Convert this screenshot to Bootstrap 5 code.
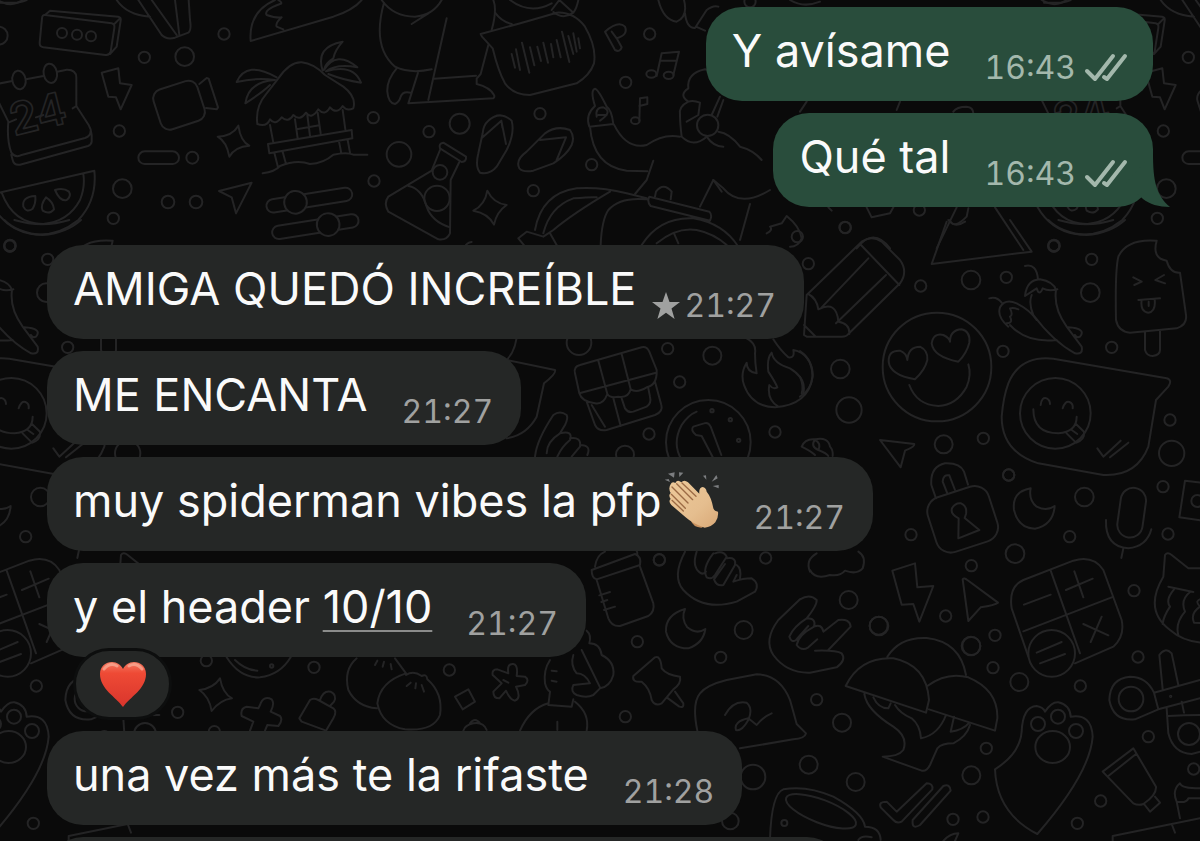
<!DOCTYPE html>
<html lang="es">
<head>
<meta charset="utf-8">
<meta name="viewport" content="width=device-width, initial-scale=1">
<title>Chat</title>
<link href="https://cdn.jsdelivr.net/npm/bootstrap@5.3.0/dist/css/bootstrap.min.css" rel="stylesheet">
<script src="https://cdn.jsdelivr.net/npm/bootstrap@5.3.0/dist/js/bootstrap.bundle.min.js" defer></script>
<style>
  body { background: #0a0a0a; color: #fafafa; font-family: Inter, "Liberation Sans", sans-serif; }
  .wallpaper { z-index: 0; }
  .wallpaper .ink { fill: none; stroke: #242425; stroke-width: 6; stroke-linecap: round; stroke-linejoin: round; }
  .wallpaper .solid { fill: #0a0a0a; }
  .wallpaper text { font-family: Inter, sans-serif; font-weight: 600; stroke-width: 5; }
  .thread { z-index: 1; padding: 7px 47px 0; }
  .bubble { min-height: 94px; padding: 14px 28px 13px 26px; border-radius: 36px; background: #252726; column-gap: 34px; max-width: 100%; }
  .bubble.sent { background: #294d3c; padding-right: 25px; }
  .bubble.starred { column-gap: 16px; }
  .bubble.upcoming { width: 72%; }
  .message { font-size: 45px; line-height: 60px; }
  .stamp { font-size: 32px; line-height: 40px; color: #a0a1a0; font-variant-numeric: tabular-nums; }
  .sent .stamp { color: #a3b8ac; }
  .tail { right: -17px; bottom: 0; }
  .received { margin-top: 38px; }
  .linked { color: inherit; text-decoration: underline; text-decoration-color: #8b8c8b; text-decoration-thickness: 2px; text-underline-offset: 7px; }
  .clap { margin: -16px 0 -16px 2px; vertical-align: 4px; }
  .reaction { width: 99px; height: 72px; margin: -9px 0 11px 26px; border: 3px solid #0d0e0e; border-radius: 36px; background: #252726; }
  .stack { row-gap: 12px; }
</style>
</head>
<body class="vh-100 overflow-hidden position-relative">

<svg class="wallpaper position-absolute top-0 start-0 w-100 h-100" viewBox="0 0 1200 841" preserveAspectRatio="xMidYMid slice" aria-hidden="true">
  <defs>
    <g id="doodles" class="ink">
      <!-- top left: box, calendar, camera, hut, melon, sliders -->
      <g transform="scale(.333333)">
        <path d="M135 45L335 70Q345 72 343 84L332 155Q328 167 316 165L130 142Q118 140 119 128L126 55Q127 44 135 45L150 32L355 50Q364 52 362 62L350 140L330 162M343 72L360 55"/>
        <circle cx="186" cy="99" r="15"/><circle cx="231" cy="104" r="15"/><circle cx="273" cy="109" r="15"/>
        <circle cx="672" cy="102" r="17"/><circle cx="433" cy="172" r="17"/><circle cx="554" cy="170" r="28"/><circle cx="-4" cy="107" r="27"/>
        <path d="M-10 252L37 243M78 238L130 228M172 215L200 209Q228 208 229 232V318L266 375Q274 388 275 405V425Q274 434 264 438L60 494Q42 497 38 480L34 464M-12 290L25 365Q20 420 34 458Q45 474 62 466L255 414Q272 408 272 392M25 368L48 358M108 352L130 345M218 325L229 318"/>
        <ellipse cx="57" cy="240" rx="20" ry="28" transform="rotate(-10 57 240)"/><ellipse cx="151" cy="220" rx="20" ry="29" transform="rotate(-10 151 220)"/>
        <text x="42" y="408" font-size="134" transform="rotate(-14 42 408)">24</text>
        <path d="M305 218L355 205L360 250L395 255L362 328L348 292L325 290Z"/>
        <rect x="468" y="253" width="138" height="125" rx="28" transform="rotate(-18 537 315)"/>
        <path d="M598 252L620 234L626 236L654 322L650 328L618 324"/>
        <path d="M715 377Q722 425 748 437Q705 440 688 470Q680 425 653 410Q697 408 715 377Z"/>
        <rect x="415" y="454" width="122" height="38" rx="19"/>
        <circle cx="577" cy="473" r="18"/><circle cx="358" cy="393" r="17"/><circle cx="367" cy="566" r="28"/><circle cx="504" cy="606" r="19"/><circle cx="588" cy="606" r="19"/><circle cx="340" cy="655" r="17"/><circle cx="30" cy="738" r="17"/>
        <path d="M657 573L755 548L708 640L695 592Z"/>
        <path d="M-10 580L283 512Q292 600 235 660Q170 712 95 702Q20 690 -20 620M5 578Q40 672 130 672Q205 665 240 600Q256 560 250 522"/>
        <path d="M106 588Q65 590 70 620Q80 640 98 626Q108 610 106 588ZM138 592Q120 615 128 632Q148 645 162 628Q160 605 138 592ZM165 570Q180 605 200 600Q215 588 207 575Q190 562 165 570Z"/>
        <path d="M835 235Q870 185 905 187Q940 190 975 225L1030 260Q1070 290 1060 325Q1040 335 1028 318Q1010 345 990 322Q975 350 955 328Q935 360 918 338Q900 365 880 345Q865 370 845 352Q825 378 810 358Q800 382 772 372Q765 320 800 280ZM810 375L820 428M885 358L893 415M1028 330L1036 388M922 345L930 408M953 338L962 400M890 388L958 376M804 432L1055 390L1057 415L808 460ZM823 458L834 502M848 455L858 492M1017 424L1024 460M1043 420L1050 458M788 520Q825 515 840 498Q890 478 930 492Q970 490 1000 464Q1040 455 1060 464H1102"/>
        <path d="M830 232Q740 180 710 246Q770 232 825 240Q745 245 736 310Q790 275 810 255M968 212Q945 140 1028 125Q1005 150 1000 175Q975 190 972 210Q1010 150 1072 202Q1010 190 978 214Q1060 190 1083 248Q1030 240 985 222"/>
        <g transform="rotate(-9 930 600)"><rect x="798" y="580" width="260" height="40" rx="20"/><circle class="solid" cx="886" cy="600" r="34"/></g>
        <g transform="rotate(-9 945 680)"><rect x="815" y="660" width="262" height="40" rx="20"/><circle class="solid" cx="985" cy="680" r="34"/></g>
        <path d="M350 0Q380 45 450 50M415 0L485 105Q500 120 525 113L565 98Q575 90 570 60L566 0M455 0L530 105M525 0L538 105M0 8H50Q70 5 80 0"/>
        <path d="M835 0Q850 10 840 12Q790 30 800 45Q830 55 845 52Q825 70 830 80L850 88M825 0Q745 35 752 123L1000 50Q1060 30 1085 0"/>
      </g>
      <!-- top middle: figure, voice note, sandals, flask, dancer -->
      <g transform="translate(360 0) scale(.333333)">
        <circle cx="40" cy="353" r="17"/><circle cx="207" cy="395" r="17"/><circle cx="299" cy="371" r="30"/><circle cx="117" cy="463" r="37"/><circle cx="42" cy="543" r="17"/><circle cx="540" cy="341" r="17"/><circle cx="520" cy="572" r="17"/><circle cx="695" cy="494" r="17"/><circle cx="797" cy="247" r="17"/><circle cx="869" cy="102" r="17"/>
        <path d="M72 8Q35 140 105 200Q150 222 215 208M65 0Q100 50 165 50Q220 45 245 0M155 72L205 40M260 55L205 300M110 205Q80 240 82 275Q85 310 105 312Q118 305 122 290Q128 272 152 278M175 215L145 310L400 295Q405 290 402 285Q390 262 350 252V236L362 222L385 135M222 236L348 227M400 0Q412 30 395 90"/>
        <path d="M362 102Q440 82 590 38Q640 35 675 80Q710 140 702 190Q690 225 650 250L510 285Q460 285 435 250Q415 215 398 145L366 110ZM455 162L465 203M468 148L480 210M486 128L508 218M510 142L523 196M532 140L543 183M550 128L564 188M573 132L580 172M590 120L602 172M606 95L628 186M625 108L640 162M640 100L650 155M655 115L660 145M405 38Q425 65 455 72M450 0Q510 45 575 10M575 30L598 0L640 38Q650 25 655 0M580 36Q610 60 640 38"/>
        <path d="M735 95L765 150Q780 158 785 142L770 115Q805 105 795 80Q775 60 735 95ZM755 95L770 115"/>
        <path d="M890 228L905 160L957 155L940 225M900 182L950 182"/><ellipse cx="874" cy="222" rx="15" ry="11"/><ellipse cx="926" cy="226" rx="15" ry="11"/>
        <path d="M838 362L840 295L862 292V312L838 318"/><ellipse cx="826" cy="362" rx="13" ry="10"/>
        <path d="M895 0Q910 60 950 65Q985 50 972 0M975 40Q980 85 1005 84L1040 30Q1060 15 1075 20M1008 80L1035 92"/>
        <path d="M385 362Q420 330 455 362Q465 400 440 450L410 500Q390 525 360 518Q345 500 355 460L368 400Q370 375 385 362ZM368 412L424 362L438 432M424 362L427 382M478 505Q465 480 500 455L555 400Q590 375 630 390Q645 410 635 435Q620 465 580 490L520 512Q490 518 478 505ZM540 420L618 412L590 480"/>
        <path d="M250 428L318 470Q320 485 305 486L240 445Q235 430 250 428ZM240 450L215 512L85 590Q70 610 85 635L235 718Q260 722 270 700L272 540L298 486M145 558Q185 565 200 620Q215 665 270 682"/><circle cx="240" cy="517" r="22"/><circle cx="231" cy="595" r="38"/>
        <path d="M382 572Q400 610 440 615Q410 635 402 674Q385 640 340 632Q375 615 382 572Z"/>
        <path d="M688 380Q675 345 705 318Q690 270 705 266Q715 268 740 320Q755 330 760 372ZM710 350Q705 322 730 322Q760 335 720 362M715 345L740 345M690 380Q700 500 800 512L862 514M762 374Q800 450 860 435Q910 400 960 410M880 482L860 540L825 582M965 410Q960 370 960 345Q955 320 985 305Q955 285 985 265Q980 220 1035 208Q1070 215 1080 260M985 305Q1000 300 1020 308L1015 345L980 365M965 410Q1000 445 1040 410"/>
        <circle cx="1043" cy="376" r="32"/>
        <path d="M1055 345L1080 290M1072 350L1090 300M1075 395Q1110 400 1140 440Q1180 450 1205 480M1040 410Q1060 440 1090 440"/>
        <path d="M525 690Q545 580 650 565Q720 560 800 580L860 595M550 700Q570 620 640 595Q700 590 710 592M475 715L500 695L550 710L580 690Q640 640 750 575M475 715L500 745M570 700L590 735M722 735Q725 660 745 630Q780 590 860 598M868 590L1048 635Q1058 645 1050 662L872 618Q860 605 868 590ZM885 590L888 575Q910 545 935 575L932 598M1020 620L1060 540L1085 575M845 735Q900 650 1000 655Q1090 670 1135 740M890 730Q950 680 1010 690Q1060 700 1100 735M942 700L955 730M335 726Q320 728 315 740"/>
      </g>
      <!-- around the sent messages -->
      <g transform="translate(690 0) scale(.333333)">
        <circle cx="466" cy="683" r="17"/><circle cx="688" cy="630" r="17"/><circle cx="1091" cy="738" r="17"/><circle cx="180" cy="5" r="17"/>
        <path d="M70 540L100 565Q150 625 240 570M180 612L150 720M230 700Q250 690 240 680L275 670L290 648Q330 680 335 715Q325 740 300 740M530 622L545 652L600 640L610 622M300 0Q340 25 390 5M415 622L425 632M740 745L800 622M915 622L1000 750M780 660Q790 690 830 650L835 625M1055 0Q1095 25 1130 0M500 745Q550 680 600 745M850 340Q850 322 830 320Q800 320 790 335M620 330L630 305M350 305L330 335"/>
      </g>
      <!-- right: pencil, hearts face, chillies, lolly, sticker bubble -->
      <g transform="translate(800 220) scale(.333333)">
        <circle cx="135" cy="22" r="17"/><circle cx="-8" cy="50" r="17"/><circle cx="25" cy="131" r="17"/><circle cx="362" cy="198" r="17"/><circle cx="513" cy="180" r="28"/><circle cx="619" cy="172" r="17"/><circle cx="762" cy="76" r="17"/><circle cx="875" cy="118" r="17"/><circle cx="871" cy="218" r="28"/><circle cx="609" cy="394" r="17"/><circle cx="935" cy="382" r="17"/><circle cx="121" cy="447" r="28"/><circle cx="147" cy="570" r="38"/><circle cx="431" cy="673" r="27"/><circle cx="550" cy="655" r="17"/><circle cx="626" cy="765" r="17"/><circle cx="1110" cy="600" r="17"/><circle cx="1115" cy="700" r="38"/>
        <path d="M12 345L20 225L185 65Q215 45 245 65L300 120Q325 155 300 190L145 342Q140 350 125 350H20ZM180 72L298 195M65 262L205 115M108 310L258 165M25 222Q50 235 55 268Q110 240 115 305Q150 310 148 342M12 315L45 348"/>
        <path d="M440 5L395 132L695 95L630 0M445 0Q465 25 495 5M745 0Q785 40 860 45Q930 40 975 0M775 0Q860 25 940 0"/>
        <circle cx="411" cy="441" r="163"/>
        <path d="M345 478Q270 465 266 425Q265 390 300 392Q320 400 322 420Q325 380 360 380Q385 392 382 420Q375 450 345 478ZM475 425Q400 410 395 370Q400 338 430 345Q450 355 450 365Q450 330 485 328Q512 335 508 368Q500 400 475 425ZM328 495Q350 555 415 558Q470 555 500 500Q515 465 505 433"/>
        <path d="M675 228Q680 180 720 178Q760 185 768 210Q760 265 800 320L845 380Q850 405 825 400Q760 365 700 285Q685 250 695 225M675 228Q690 218 710 205Q718 230 728 205Q745 215 772 208M714 178Q710 130 675 138M568 235Q590 228 605 248M625 320Q590 290 600 262Q615 235 650 250Q690 270 710 300M655 268Q640 262 630 265Q640 285 630 290Q640 310 620 310M630 315Q680 370 770 360M805 322Q860 325 840 350Q830 355 825 345"/>
        <path d="M1070 62Q980 55 955 110Q945 150 948 300Q955 335 990 338L1130 325Q1162 315 1158 285L1140 158Q1110 160 1100 122Q1055 115 1070 62ZM1035 335V390Q1040 408 1058 408Q1080 405 1080 390V332M1000 172L1025 185L1003 195M1092 165L1066 180L1095 190M1015 240L1080 235M1025 240Q1020 275 1045 278Q1068 275 1064 238M1046 245V258"/>
        <path d="M625 490Q660 405 760 416L1100 475Q1118 480 1105 500L1068 540L1045 680Q1010 770 910 765L715 730Q605 695 605 590Q610 530 625 490Z"/>
        <circle cx="766" cy="580" r="106"/>
        <path d="M722 555Q725 530 740 535Q750 540 750 552M788 565Q795 542 808 546Q820 550 818 565M700 568Q700 640 775 640Q830 635 830 590M800 640L828 668Q855 660 852 635L828 612M815 630L832 642M892 685L910 710L962 662M930 712L985 668"/>
        <path d="M240 660L343 672Q345 680 315 692L302 742Z"/>
        <path d="M0 393Q38 420 38 465Q35 510 0 530M0 470Q12 500 5 520M5 680Q15 655 45 658Q85 650 90 680Q100 690 98 708M5 680Q35 695 45 705M45 658Q30 680 55 690Q65 670 45 660M55 690Q80 700 85 708"/>
      </g>
      <!-- right: padlock, moon, microphone, calculator, cat -->
      <g transform="translate(860 440) scale(.333333)">
        <circle cx="446" cy="105" r="17"/><circle cx="153" cy="284" r="17"/><circle cx="334" cy="377" r="17"/><circle cx="465" cy="341" r="28"/><circle cx="629" cy="290" r="17"/><circle cx="673" cy="171" r="28"/><circle cx="909" cy="140" r="17"/><circle cx="924" cy="282" r="17"/><circle cx="822" cy="452" r="17"/><circle cx="257" cy="528" r="17"/><circle cx="57" cy="558" r="28"/><circle cx="405" cy="586" r="17"/><circle cx="333" cy="618" r="28"/>
        <rect x="212" y="152" width="192" height="172" rx="45" transform="rotate(-18 308 238)"/>
        <path d="M228 175L214 135Q210 80 255 70Q300 68 312 95L324 134M262 160L248 125Q250 102 268 106L285 150M296 235Q270 222 276 205Q285 188 303 190Q322 198 318 222L314 234L358 270L295 295Z"/>
        <path d="M512 145Q455 155 462 210Q475 265 525 266Q580 255 584 198Q560 215 530 200Q505 180 512 145Z"/>
        <rect x="777" y="143" width="76" height="150" rx="38" transform="rotate(8 815 218)"/><path d="M738 240Q735 320 805 325Q860 320 874 268M790 325L784 354"/>
        <path d="M97 392L165 370L172 442L220 438L178 545L160 492L125 494Z"/><path d="M308 418Q312 412 322 420L414 488Q405 495 362 502L325 543Z"/>
        <path d="M505 650L455 505Q445 440 490 420L640 362Q700 345 730 390L785 540Q795 590 760 620L645 670M572 392L660 640M490 574L755 472M492 494L572 464M618 450L698 416M643 394L670 472M670 552L745 586M725 530L692 606"/>
        <circle class="solid" cx="575" cy="640" r="70"/><path d="M530 638L605 606M540 670L615 642"/>
        <path d="M910 410L915 345Q922 335 935 345L985 385H1030M910 410Q850 510 930 570Q970 605 1030 608M925 440L1000 456M942 448Q915 480 930 500Q910 530 908 552M990 456Q960 480 975 515Q945 550 955 585M1030 475Q1000 480 1020 500Q990 520 1002 548L1030 550M958 232L975 122L1040 130M958 232L1030 242"/><circle cx="1012" cy="183" r="18"/>
      </g>
      <!-- centre: gift, coin, fire, hand -->
      <g transform="translate(500 330) scale(.333333)">
        <circle cx="503" cy="56" r="17"/><circle cx="637" cy="77" r="27"/><circle cx="539" cy="156" r="17"/><circle cx="447" cy="312" r="17"/><circle cx="825" cy="306" r="17"/><circle cx="375" cy="374" r="27"/><circle cx="237" cy="38" r="37"/><circle cx="478" cy="690" r="17"/><circle cx="797" cy="684" r="17"/>
        <path d="M52 0Q50 60 20 90L165 120Q170 130 132 160L110 260Q80 315 20 325"/>
        <path d="M225 130Q220 110 240 105L425 52Q440 48 448 65L470 120Q472 165 440 172Q410 190 392 178Q385 205 355 200Q330 205 322 192Q310 225 285 220Q245 215 238 190ZM295 92L322 192M365 72L392 178M238 190L468 128M260 215L285 285Q295 305 320 300L465 255Q490 245 484 225L465 155M275 225L315 290M340 205L362 288M365 205L375 235Q385 250 400 245L440 230Q455 220 450 200L445 175"/>
        <circle cx="625" cy="337" r="127"/><path d="M545 390Q515 340 545 285Q565 255 590 245"/><circle cx="636" cy="242" r="5"/><circle cx="691" cy="269" r="5"/><circle cx="716" cy="331" r="5"/>
        <path d="M640 385L605 318L588 315Q570 300 580 290L612 280Q625 275 632 290L664 375"/>
        <path d="M740 25Q770 40 765 70Q765 100 770 130Q740 125 740 98Q720 130 732 165Q755 230 825 232Q925 225 938 140Q935 70 880 60Q885 85 865 82Q840 60 820 28M815 68Q800 85 805 125Q825 155 832 172Q820 180 808 165Q800 210 835 230M815 68Q820 100 870 115Q920 145 910 190"/>
        <path d="M105 380Q110 330 160 255Q180 240 200 255Q205 265 195 285L180 310Q140 335 140 370M180 310Q220 300 210 330Q185 350 172 380M210 325Q245 320 240 350L215 380M240 345Q275 345 262 375"/>
      </g>
      <!-- lower centre: bottle, hands, pin, note bubble -->
      <g transform="translate(560 540) scale(.333333)">
        <circle cx="298" cy="59" r="17"/><circle cx="232" cy="305" r="17"/><circle cx="482" cy="352" r="17"/><circle cx="551" cy="270" r="27"/><circle cx="866" cy="180" r="27"/><circle cx="196" cy="530" r="17"/><circle cx="770" cy="479" r="17"/><circle cx="846" cy="548" r="27"/><circle cx="956" cy="257" r="27"/>
        <path d="M95 90L225 42Q245 50 240 75L110 118Q95 115 95 90ZM105 80Q110 45 135 35M215 20Q235 30 232 45M110 120L145 235Q155 260 180 258L265 228Q285 215 280 190L240 80M118 166L150 156M124 186L142 180M132 210L165 200"/>
        <path d="M375 35Q335 110 370 150Q430 215 530 185L585 155Q600 130 575 115Q550 115 520 125L530 105M410 35Q395 80 420 98Q430 105 438 95M460 40Q425 85 440 112Q455 120 465 105M465 40Q490 30 500 50L465 105M500 55Q530 50 525 75L490 135Q470 140 462 118L495 72M530 75Q545 85 540 115"/>
        <path d="M375 207Q315 225 318 275Q330 325 385 325Q430 310 436 267Q410 285 382 262Q362 235 375 207Z"/>
        <path d="M720 178Q750 160 770 180Q772 195 740 235Q770 235 762 260Q785 250 790 275L835 240Q870 235 872 260L805 330M720 178L655 240Q610 300 640 345Q680 400 750 398L830 382Q860 360 845 340Q830 330 765 332M740 235Q700 260 688 290Q695 310 708 300L745 258M762 260Q715 285 710 315Q725 335 745 322L772 298"/>
        <path d="M220 408L285 352Q302 345 305 385Q320 405 360 410Q365 430 340 448L305 490Q285 500 275 480Q270 445 245 425Q215 428 220 408ZM320 472L358 500Q372 505 370 490L345 455"/>
        <path d="M412 572Q395 490 420 460Q440 435 500 420L590 403Q660 405 690 480Q700 515 710 552L738 580Q735 595 700 598L540 625M495 525Q520 480 560 488Q580 505 565 540Q545 575 528 570Q520 545 565 535L590 555Q610 530 635 520"/>
        <path d="M750 95Q735 60 770 40M750 90Q765 120 810 105Q840 110 855 92Q890 105 908 85Q920 50 895 35"/>
        <path d="M80 272Q95 285 88 310Q120 310 125 345Q165 365 160 405Q150 440 120 445L100 465Q80 475 50 465Q30 455 40 435L90 430Q75 400 50 400Q30 375 40 345M65 330L120 442"/>
      </g>
      <!-- bottom right: mushrooms, ticks, paw, tube, scissors, mug -->
      <g transform="translate(730 620) scale(.333333)">
        <circle cx="724" cy="78" r="27"/><circle cx="789" cy="143" r="17"/><circle cx="868" cy="186" r="27"/><circle cx="1051" cy="198" r="17"/><circle cx="1224" cy="111" r="17"/><circle cx="236" cy="434" r="27"/><circle cx="377" cy="486" r="27"/><circle cx="69" cy="471" r="37"/><circle cx="769" cy="385" r="17"/><circle cx="724" cy="466" r="27"/><circle cx="669" cy="598" r="17"/><circle cx="759" cy="591" r="17"/><circle cx="1042" cy="610" r="17"/><circle cx="1112" cy="543" r="17"/><circle cx="1255" cy="350" r="17"/><circle cx="1391" cy="447" r="17"/><circle cx="1" cy="603" r="25"/>
        <path d="M347 198Q390 110 490 115Q590 135 597 240L588 278ZM472 110Q510 50 590 54Q690 65 708 165M592 198Q650 155 715 172Q805 210 802 295L795 332L597 268M403 222Q410 270 490 320Q535 350 520 390Q505 410 458 410L575 452Q590 455 600 435L622 385Q635 370 670 370Q710 350 720 315M430 232Q445 265 475 265L482 250M495 255Q510 280 545 295Q570 315 573 355Q625 345 648 285M672 290L662 335Q700 330 718 308"/>
        <path d="M452 562Q445 545 470 545L500 575L590 490Q610 490 607 508L515 605Q500 612 490 600ZM548 600L640 498Q660 490 662 512L570 615Q545 630 548 600Z"/>
        <path d="M795 448Q870 400 875 335Q878 260 920 258Q940 262 945 275Q965 245 985 247Q1020 255 1022 290Q1085 280 1088 350Q1080 460 922 642Q800 580 795 448Z"/><circle cx="924" cy="312" r="21"/><circle cx="984" cy="290" r="21"/><circle cx="1038" cy="333" r="21"/><ellipse cx="968" cy="381" rx="52" ry="48"/>
        <path d="M1118 455L1210 385L1278 500Q1280 525 1240 552Q1225 558 1210 550ZM1135 468L1218 402M1242 552L1260 575L1290 548L1275 530"/>
        <path d="M1272 218L1410 180M1285 268L1410 235M1272 218L1285 268L1215 298Q1150 305 1138 240Q1140 175 1200 170Q1250 170 1272 218ZM1298 208L1288 105Q1305 80 1325 100L1345 195M1310 265L1315 340Q1330 400 1385 402L1430 390M1355 245L1362 278M1315 288Q1370 285 1420 285"/><circle cx="1203" cy="237" r="37"/><circle cx="1377" cy="342" r="33"/><circle cx="1322" cy="229" r="2"/>
        <path d="M120 655Q125 520 160 508Q230 495 310 530Q400 580 405 620Q450 620 452 660M385 660Q395 645 425 652"/><ellipse cx="273" cy="574" rx="112" ry="35" transform="rotate(21 273 574)"/><circle cx="163" cy="609" r="9"/>
        <path d="M1148 663V648L1410 595M1325 612L1335 638M1350 595L1340 545Q1325 510 1350 490Q1355 505 1410 505M1340 545Q1370 550 1375 535L1410 535M640 663Q660 640 685 640L675 663"/>
      </g>
      <!-- strip below the header message -->
      <g transform="translate(160 640) scale(.333333)">
        <circle cx="139" cy="62" r="17"/><circle cx="53" cy="217" r="17"/><circle cx="462" cy="82" r="17"/><circle cx="868" cy="90" r="17"/><circle cx="163" cy="275" r="17"/><circle cx="335" cy="78" r="5"/>
        <path d="M180 115Q188 160 216 175Q180 180 155 213Q148 170 118 150Q160 145 180 115ZM200 52Q240 115 300 112Q360 105 392 52M225 60Q255 90 292 92"/>
        <path d="M300 195Q310 165 335 178Q345 190 332 215L360 228Q370 240 355 258L322 255L315 272M300 195L295 205L260 200Q240 205 245 228L280 245L270 272"/>
        <path d="M418 235L450 180Q460 172 475 180L520 205Q532 215 520 235L498 272L425 245ZM480 180Q490 150 512 155Q532 165 522 185L510 198"/>
        <path d="M590 55Q550 90 565 150Q590 200 650 205M705 55L738 100M738 100Q660 125 652 190Q665 255 735 268Q820 275 840 225Q850 160 802 118Q800 100 785 108Q760 90 738 105M652 62L645 75M672 65L668 80M692 72L695 88M752 128L740 138M768 130L766 145M785 135L792 155"/>
        <path d="M885 170L925 148L945 185L908 208Z"/>
        <path d="M1045 100Q1040 70 1060 72Q1075 75 1070 108L1095 110Q1110 120 1095 135L1068 140Q1085 175 1065 182Q1050 180 1038 152L1018 175Q1000 175 1000 155L1025 130L998 105Q995 88 1012 88ZM1030 120L1045 128M910 272Q915 255 940 250Q970 245 980 270M930 250Q945 230 960 250"/>
        <path d="M1170 60Q1150 90 1155 130Q1160 150 1170 155L1165 195L1235 200L1240 178M1175 92L1190 94M1175 122L1190 125M1080 272Q1110 205 1165 190M1245 185Q1290 220 1280 272M1192 245V270"/>
      </g>
    </g>
  </defs>
  <use href="#doodles" x="-1044"/>
  <use href="#doodles"/>
  <use href="#doodles" x="1044"/>
</svg>

<svg class="d-none" aria-hidden="true">
  <symbol id="ticks" viewBox="0 0 44 30">
    <path d="M3 18L11 26L29 3M20 24L23 26L41 3" fill="none" stroke="currentColor" stroke-width="4" stroke-linecap="round" stroke-linejoin="round"/>
  </symbol>
</svg>

<main class="thread position-relative vh-100 overflow-hidden">
  <section class="stack d-flex flex-column align-items-end" aria-label="Enviados">
    <article class="bubble sent d-flex align-items-start">
      <span class="message">Y avísame</span>
      <span class="stamp d-flex align-items-center align-self-end gap-2"><time>16:43</time><svg width="44" height="30" aria-label="Entregado"><use href="#ticks"/></svg></span>
    </article>
    <article class="bubble sent d-flex align-items-start position-relative">
      <span class="message">Qué tal</span>
      <span class="stamp d-flex align-items-center align-self-end gap-2"><time>16:43</time><svg width="44" height="30" aria-label="Entregado"><use href="#ticks"/></svg></span>
      <svg class="tail position-absolute" width="44" height="54" viewBox="0 0 44 54" aria-hidden="true"><path d="M27 0C27 28 30 42 44 54C33 54 23 51 17 46L0 30Z" fill="#294d3c"/></svg>
    </article>
  </section>

  <section class="received stack d-flex flex-column align-items-start" aria-label="Recibidos">
    <article class="bubble starred d-flex align-items-start">
      <span class="message">AMIGA QUEDÓ INCREÍBLE</span>
      <span class="stamp d-flex align-items-center align-self-end gap-1"><svg width="28" height="28" viewBox="0 0 28 28" aria-label="Destacado"><path d="M14 0L17.5 10H28L19.5 16.5L22.6 27L14 20.8L5.400 27L8.500 16.500L0 10H10.500Z" fill="currentColor"/></svg><time>21:27</time></span>
    </article>
    <article class="bubble d-flex align-items-start">
      <span class="message">ME ENCANTA</span><time class="stamp align-self-end">21:27</time>
    </article>
    <article class="bubble d-flex align-items-start">
      <span class="message">muy spiderman vibes la pfp<svg class="clap" width="56" height="58" viewBox="0 0 168 174" role="img" aria-label="aplauso">
        <defs><linearGradient id="skin" x1="0" y1="0" x2="1" y2="1"><stop offset="0" stop-color="#edc999"/><stop offset=".6" stop-color="#e5be8f"/><stop offset="1" stop-color="#d9a977"/></linearGradient></defs>
        <path d="M12 8L32 4L30 20ZM45 4L58 5L46 18ZM2 26L14 24L18 33ZM117 14L126 13L127 26ZM157 12L161 22L143 32ZM146 45L164 42V52Z" fill="#7c7e80"/>
        <path d="M80 148Q88 170 112 170Q130 165 140 148Z" fill="#ca925f"/>
        <path d="M20 40Q24 30 34 36Q40 24 52 34Q60 24 72 34L106 68Q104 50 116 48Q126 50 128 62Q142 78 148 112Q152 122 162 122Q164 140 154 154Q142 168 122 170Q86 158 64 138L22 102Q12 90 20 84Q12 72 20 66Q12 52 20 40Z" fill="url(#skin)"/>
        <path d="M24 48L72 96M38 38L86 86M54 36L96 76M22 70L64 112M24 88L58 120" fill="none" stroke="#9c6b45" stroke-width="4" stroke-linecap="round"/>
      </svg></span><time class="stamp align-self-end">21:27</time>
    </article>
    <div>
      <article class="bubble d-inline-flex align-items-start">
        <span class="message">y el header <a class="linked" href="#">10/10</a></span><time class="stamp align-self-end">21:27</time>
      </article>
      <button type="button" class="reaction d-flex align-items-center justify-content-center p-0 position-relative" aria-label="Reacción: corazón">
        <svg width="48" height="46" viewBox="0 0 48 46" aria-hidden="true">
          <defs><linearGradient id="heart" x1="0" y1="0" x2="0" y2="1"><stop offset="0" stop-color="#f57a62"/><stop offset=".25" stop-color="#ee4a35"/><stop offset="1" stop-color="#d9352c"/></linearGradient></defs>
          <path d="M24 46C17 36 1 28 1 13C1 5 7 1 13 1C18 1 22 4 24 8C26 4 30 1 35 1C41 1 47 5 47 13C47 28 31 36 24 46Z" fill="url(#heart)"/>
          <path d="M5 8Q11 1 18 5M30 5Q37 1 43 8" fill="none" stroke="#fab09b" stroke-width="3" stroke-linecap="round" opacity=".7"/>
        </svg>
      </button>
      <article class="bubble d-inline-flex align-items-start">
        <span class="message">una vez más te la rifaste</span><time class="stamp align-self-end">21:28</time>
      </article>
    </div>
    <article class="bubble upcoming" aria-label="Mensaje siguiente"></article>
  </section>
</main>
</body>
</html>
